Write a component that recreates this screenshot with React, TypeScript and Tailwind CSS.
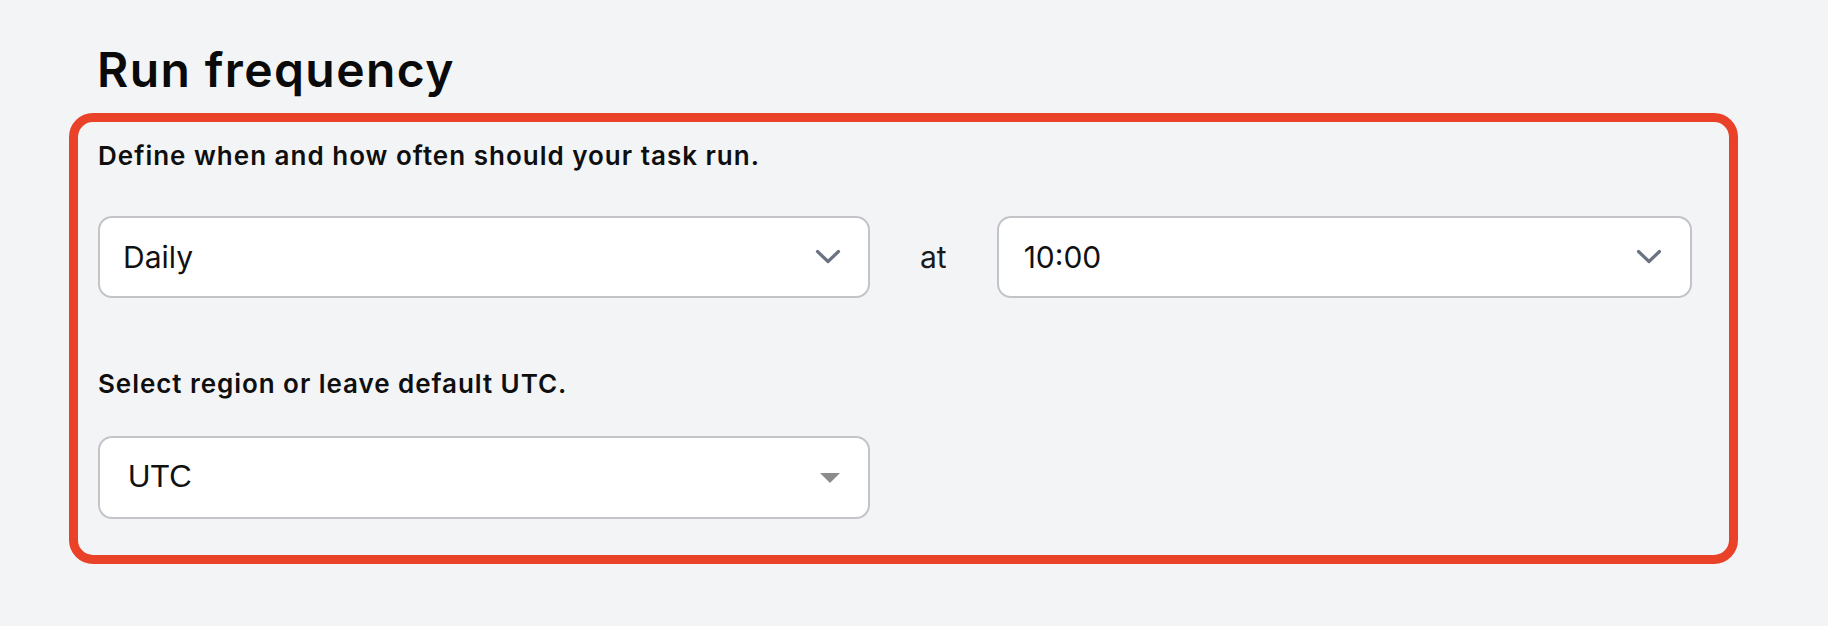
import React from "react";

function Chevron() {
  return (
    <svg width="26" height="16" viewBox="0 0 26 16" fill="none" className="shrink-0">
      <path d="M2.5 2.5 L13 12.5 L23.5 2.5" stroke="#6b7280" strokeWidth="3.2" strokeLinecap="round" strokeLinejoin="round" />
    </svg>
  );
}

function Triangle() {
  return (
    <svg width="20" height="10" viewBox="0 0 20 10" className="shrink-0">
      <path d="M0 0 L20 0 L10 10 Z" fill="#8c8c8c" />
    </svg>
  );
}

export default function App() {
  const inter = { fontFamily: "Inter, 'Noto Sans', sans-serif" };
  return (
    <div className="w-[1828px] h-[626px] bg-[#f3f4f6] overflow-hidden" style={inter}>
      <h1 className="pl-[97px] pt-[46px] text-[48px] leading-[48px] font-semibold text-[#0a0a0a] tracking-[1.4px]">
        Run frequency
      </h1>
      <div className="ml-[69px] mt-[19px] w-[1669px] h-[451px] border-[9px] border-[#ea4129] rounded-[24px] pl-[20px] pt-[18px]">
        <div className="text-[26px] leading-[32px] font-semibold text-[#0f0f0f] tracking-[1px]">
          Define when and how often should your task run.
        </div>
        <div className="mt-[44px] flex items-center">
          <div className="w-[772px] h-[82px] bg-white border-2 border-[#c3c4c7] rounded-[14px] flex items-center justify-between pl-[23px] pr-[27px]">
            <span className="text-[30px] text-[#111111]">Daily</span>
            <Chevron />
          </div>
          <span className="ml-[50px] mr-[50px] text-[30px] text-[#1a1a1a]">at</span>
          <div className="w-[695px] h-[82px] bg-white border-2 border-[#c3c4c7] rounded-[14px] flex items-center justify-between pl-[25px] pr-[28px]">
            <span className="text-[30px] text-[#111111]">10:00</span>
            <Chevron />
          </div>
        </div>
        <div className="mt-[70px] text-[26px] leading-[32px] font-semibold text-[#0f0f0f] tracking-[0.95px]">
          Select region or leave default UTC.
        </div>
        <div className="mt-[36px] w-[772px] h-[83px] bg-white border-2 border-[#c3c4c7] rounded-[14px] flex items-center justify-between pl-[28px] pr-[28px]">
          <span className="text-[31px] text-[#111111]" style={{ fontFamily: "'Liberation Sans', Arial, sans-serif" }}>UTC</span>
          <Triangle />
        </div>
      </div>
    </div>
  );
}
